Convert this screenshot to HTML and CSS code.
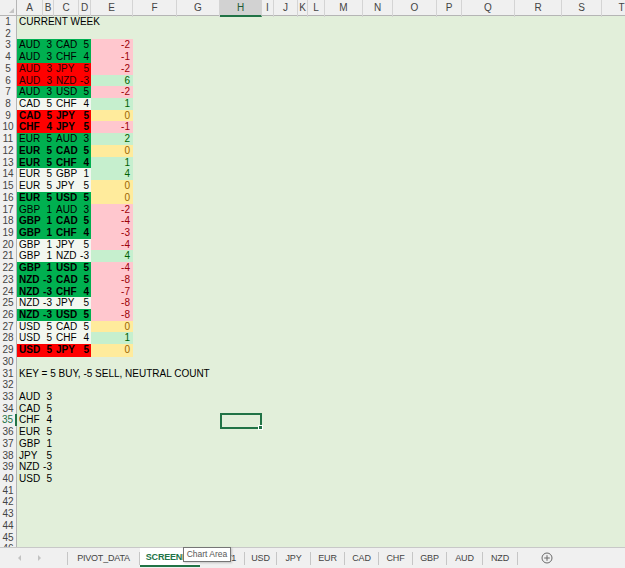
FILE: index.html
```html
<!DOCTYPE html>
<html lang="en">
<head>
  <meta charset="UTF-8">
  <title>SCREENER - Workbook</title>
  <link rel="stylesheet" href="styles.css">
</head>
<body>
  <!-- Sheet grid -->
  <div class="sheet">
    <div class="row head">
      <span class="corner"><svg width="17" height="15" viewBox="0 0 17 15"><polygon points="14,8 14,13 9,13" fill="#c4c4c4"/></svg></span>
      <span>A</span><span>B</span><span>C</span><span>D</span><span>E</span><span>F</span><span>G</span>
      <span class="col-active">H</span><span>I</span><span>J</span><span>K</span><span>L</span><span>M</span>
      <span>N</span><span>O</span><span>P</span><span>Q</span><span>R</span><span>S</span><span>T</span>
    </div>

    <div class="row"><span class="num">1</span><span class="wide">CURRENT WEEK</span></div>
    <div class="row"><span class="num">2</span></div>

    <!-- Pair scores -->
    <div class="row"><span class="num">3</span><span class="pair buy"><span>AUD</span><span>3</span><span>CAD</span><span>5</span></span><span class="diff neg">-2</span></div>
    <div class="row"><span class="num">4</span><span class="pair buy"><span>AUD</span><span>3</span><span>CHF</span><span>4</span></span><span class="diff neg">-1</span></div>
    <div class="row"><span class="num">5</span><span class="pair sell"><span>AUD</span><span>3</span><span>JPY</span><span>5</span></span><span class="diff neg">-2</span></div>
    <div class="row"><span class="num">6</span><span class="pair sell"><span>AUD</span><span>3</span><span>NZD</span><span>-3</span></span><span class="diff pos">6</span></div>
    <div class="row"><span class="num">7</span><span class="pair buy"><span>AUD</span><span>3</span><span>USD</span><span>5</span></span><span class="diff neg">-2</span></div>
    <div class="row"><span class="num">8</span><span class="pair plain"><span>CAD</span><span>5</span><span>CHF</span><span>4</span></span><span class="diff pos">1</span></div>
    <div class="row"><span class="num">9</span><span class="pair sell bold"><span>CAD</span><span>5</span><span>JPY</span><span>5</span></span><span class="diff zero">0</span></div>
    <div class="row"><span class="num">10</span><span class="pair sell bold"><span>CHF</span><span>4</span><span>JPY</span><span>5</span></span><span class="diff neg">-1</span></div>
    <div class="row"><span class="num">11</span><span class="pair buy"><span>EUR</span><span>5</span><span>AUD</span><span>3</span></span><span class="diff pos">2</span></div>
    <div class="row"><span class="num">12</span><span class="pair buy bold"><span>EUR</span><span>5</span><span>CAD</span><span>5</span></span><span class="diff zero">0</span></div>
    <div class="row"><span class="num">13</span><span class="pair buy bold"><span>EUR</span><span>5</span><span>CHF</span><span>4</span></span><span class="diff pos">1</span></div>
    <div class="row"><span class="num">14</span><span class="pair plain"><span>EUR</span><span>5</span><span>GBP</span><span>1</span></span><span class="diff pos">4</span></div>
    <div class="row"><span class="num">15</span><span class="pair plain"><span>EUR</span><span>5</span><span>JPY</span><span>5</span></span><span class="diff zero">0</span></div>
    <div class="row"><span class="num">16</span><span class="pair buy bold"><span>EUR</span><span>5</span><span>USD</span><span>5</span></span><span class="diff zero">0</span></div>
    <div class="row"><span class="num">17</span><span class="pair buy"><span>GBP</span><span>1</span><span>AUD</span><span>3</span></span><span class="diff neg">-2</span></div>
    <div class="row"><span class="num">18</span><span class="pair buy bold"><span>GBP</span><span>1</span><span>CAD</span><span>5</span></span><span class="diff neg">-4</span></div>
    <div class="row"><span class="num">19</span><span class="pair buy bold"><span>GBP</span><span>1</span><span>CHF</span><span>4</span></span><span class="diff neg">-3</span></div>
    <div class="row"><span class="num">20</span><span class="pair plain"><span>GBP</span><span>1</span><span>JPY</span><span>5</span></span><span class="diff neg">-4</span></div>
    <div class="row"><span class="num">21</span><span class="pair plain"><span>GBP</span><span>1</span><span>NZD</span><span>-3</span></span><span class="diff pos">4</span></div>
    <div class="row"><span class="num">22</span><span class="pair buy bold"><span>GBP</span><span>1</span><span>USD</span><span>5</span></span><span class="diff neg">-4</span></div>
    <div class="row"><span class="num">23</span><span class="pair buy bold"><span>NZD</span><span>-3</span><span>CAD</span><span>5</span></span><span class="diff neg">-8</span></div>
    <div class="row"><span class="num">24</span><span class="pair buy bold"><span>NZD</span><span>-3</span><span>CHF</span><span>4</span></span><span class="diff neg">-7</span></div>
    <div class="row"><span class="num">25</span><span class="pair plain"><span>NZD</span><span>-3</span><span>JPY</span><span>5</span></span><span class="diff neg">-8</span></div>
    <div class="row"><span class="num">26</span><span class="pair buy bold"><span>NZD</span><span>-3</span><span>USD</span><span>5</span></span><span class="diff neg">-8</span></div>
    <div class="row"><span class="num">27</span><span class="pair plain"><span>USD</span><span>5</span><span>CAD</span><span>5</span></span><span class="diff zero">0</span></div>
    <div class="row"><span class="num">28</span><span class="pair plain"><span>USD</span><span>5</span><span>CHF</span><span>4</span></span><span class="diff pos">1</span></div>
    <div class="row"><span class="num">29</span><span class="pair sell bold"><span>USD</span><span>5</span><span>JPY</span><span>5</span></span><span class="diff zero">0</span></div>

    <div class="row"><span class="num">30</span></div>
    <div class="row"><span class="num">31</span><span class="wide">KEY = 5 BUY, -5 SELL, NEUTRAL COUNT</span></div>
    <div class="row"><span class="num">32</span></div>

    <!-- Currency counts -->
    <div class="row"><span class="num">33</span><span class="cell">AUD</span><span class="val">3</span></div>
    <div class="row"><span class="num">34</span><span class="cell">CAD</span><span class="val">5</span></div>
    <div class="row"><span class="num">35</span><span class="cell">CHF</span><span class="val">4</span><span class="selected"><i class="handle"></i></span></div>
    <div class="row"><span class="num">36</span><span class="cell">EUR</span><span class="val">5</span></div>
    <div class="row"><span class="num">37</span><span class="cell">GBP</span><span class="val">1</span></div>
    <div class="row"><span class="num">38</span><span class="cell">JPY</span><span class="val">5</span></div>
    <div class="row"><span class="num">39</span><span class="cell">NZD</span><span class="val">-3</span></div>
    <div class="row"><span class="num">40</span><span class="cell">USD</span><span class="val">5</span></div>

    <div class="row"><span class="num">41</span></div>
    <div class="row"><span class="num">42</span></div>
    <div class="row"><span class="num">43</span></div>
    <div class="row"><span class="num">44</span></div>
    <div class="row"><span class="num">45</span></div>
    <div class="row"><span class="num">46</span></div>
  </div>

  <!-- Sheet tabs -->
  <div class="tabs">
    <div class="nav">
      <svg width="6" height="8" viewBox="0 0 6 8"><polygon points="4,1 4,7 1,4" fill="#c2c2c2"/></svg>
      <svg width="6" height="8" viewBox="0 0 6 8"><polygon points="2,1 2,7 5,4" fill="#c2c2c2"/></svg>
    </div>
    <div class="tab">PIVOT_DATA</div>
    <div class="tab active">SCREENER</div>
    <div class="tab behind">CHART1</div>
    <div class="tab">USD</div>
    <div class="tab">JPY</div>
    <div class="tab">EUR</div>
    <div class="tab">CAD</div>
    <div class="tab">CHF</div>
    <div class="tab">GBP</div>
    <div class="tab">AUD</div>
    <div class="tab">NZD</div>
    <div class="add">
      <svg width="12" height="12" viewBox="0 0 12 12">
        <circle cx="6" cy="6" r="5" fill="none" stroke="#6a6a6a" stroke-width="1"/>
        <path d="M6 3.2v5.6M3.2 6h5.6" stroke="#6a6a6a" stroke-width="1"/>
      </svg>
    </div>
  </div>

  <div class="tooltip">Chart Area</div>
</body>
</html>
```

FILE: styles.css
```css
* {
  margin: 0;
  padding: 0;
  box-sizing: border-box;
}

body {
  font-family: "Liberation Sans", Arial, sans-serif;
  font-size: 10px;
  color: #000;
  background-color: #f0f0f0;
  overflow: hidden;
}

/* Sheet */
.sheet {
  height: 547px;
  overflow: hidden;
  background-color: #e2efda;
}

.row {
  display: grid;
  grid-template-columns: 17px 26px 11px 25px 12px 42px 44px 43px 42px 12px 24px 10px 17px 38px 30px 44px 25px 53px 47px 40px 40px;
  height: 11.72px;
  line-height: 11.72px;
  white-space: nowrap;
}

.head {
  height: 16px;
  line-height: 15px;
  background-color: #f0f0f0;
  border-bottom: 1px solid #b5b5b5;
  color: #444;
}

.head span {
  text-align: center;
  border-right: 1px solid #d4d4d4;
}

.head .corner {
  border-right: 1px solid #b5b5b5;
}

.head .corner svg {
  display: block;
}

.head .col-active {
  background-color: #d2d2d2;
  color: #1f5a35;
  border-bottom: 2px solid #217346;
}

.num {
  background-color: #f0f0f0;
  color: #444;
  text-align: center;
  border-right: 1px solid #b5b5b5;
  border-bottom: 1px solid #dadada;
}

.row:nth-child(36) .num {
  color: #217346;
  border-right: 2px solid #217346;
}

.wide {
  grid-column: 2 / -1;
  padding-left: 2px;
}

.pair {
  grid-column: span 4;
  display: grid;
  grid-template-columns: 26px 11px 25px 12px;
}

.pair span {
  padding-left: 2px;
}

.pair span:nth-child(even) {
  display: flex;
  justify-content: flex-end;
  padding: 0 2px 0 0;
}

.buy {
  background-color: #00b050;
}

.sell {
  background-color: #ff0000;
  color: #2a0000;
}

.plain {
  background-color: #f3f7f0;
}

.bold {
  font-weight: bold;
  color: #000;
}

.diff {
  display: flex;
  justify-content: flex-end;
  padding-right: 3px;
}

.neg {
  background-color: #ffc7ce;
  color: #9c0006;
}

.pos {
  background-color: #c6efce;
  color: #006100;
}

.zero {
  background-color: #ffeb9c;
  color: #9c6500;
}

.cell {
  padding-left: 2px;
}

.val {
  display: flex;
  justify-content: flex-end;
  padding-right: 2px;
}

.selected {
  grid-column: 9;
  position: relative;
  border: 2px solid #217346;
  margin: -1px 0 -2px;
}

.handle {
  position: absolute;
  right: -3px;
  bottom: -3px;
  width: 5px;
  height: 5px;
  background-color: #217346;
  border: 1px solid #fff;
}

/* Tabs */
.tabs {
  height: 21px;
  display: grid;
  grid-template-columns: 68px 72px 60px 45px 32px 34px 34px 34px 34px 34px 36px 35px 1fr;
  align-items: center;
  background-color: #f0f0f0;
  border-top: 1px solid #c8c8c8;
  font-size: 9px;
  letter-spacing: -0.2px;
  color: #444;
}

.nav {
  display: flex;
  gap: 13px;
  padding-left: 17px;
  height: 13px;
  align-items: center;
  border-right: 1px solid #c6c6c6;
}

.nav svg {
  display: block;
}

.tab {
  height: 13px;
  line-height: 13px;
  text-align: center;
  border-right: 1px solid #c6c6c6;
}

.tab.behind {
  text-align: right;
  padding-right: 8px;
}

.tab.active {
  align-self: start;
  height: 19px;
  line-height: 18px;
  background-color: #fff;
  border-right: none;
  border-bottom: 2px solid #217346;
  color: #217346;
  font-weight: bold;
}

.add {
  padding-left: 23px;
}

.add svg {
  display: block;
}

.tooltip {
  position: absolute;
  left: 183px;
  top: 547px;
  width: 48px;
  height: 15px;
  line-height: 13px;
  text-align: center;
  background-color: #fff;
  border: 1px solid #767676;
  font-size: 8.5px;
  color: #575757;
  box-shadow: 1px 1px 2px rgba(0, 0, 0, 0.2);
}
```
